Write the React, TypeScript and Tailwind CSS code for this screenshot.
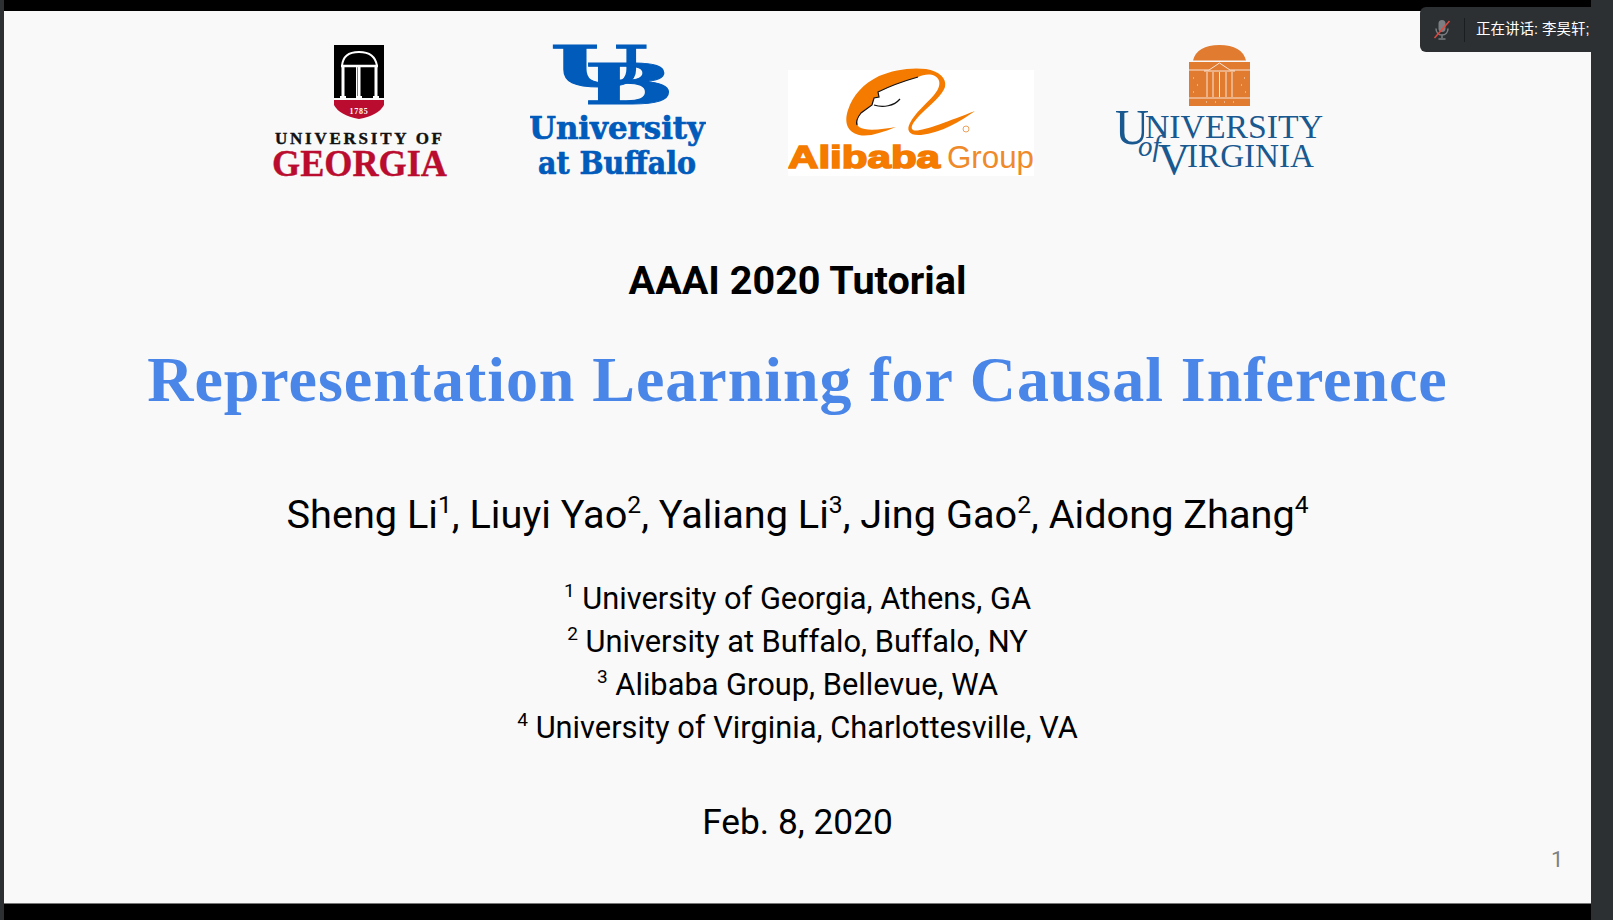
import React from 'react';

const roboto = { fontFamily: 'Roboto, "Noto Sans CJK SC", sans-serif' };

const GeorgiaLogo = () => (
  <svg width="176" height="135" viewBox="272 44 176 135">
    <path d="M334 45H384V98H334Z" fill="#000" />
    <path d="M334 100H384V105Q379 115 359 119Q339 115 334 105Z" fill="#ba0c2f" />
    <path d="M342 66Q343 52 359 52Q375 52 377 66" fill="none" stroke="#fff" strokeWidth="2" />
    <path d="M341 66H378" stroke="#fff" strokeWidth="2.5" />
    <path d="M343 66V97M359 66V97M376 66V97" stroke="#fff" strokeWidth="3" />
    <path d="M356.500 66V97" stroke="#fff" strokeWidth="1" />
    <path d="M340 96H346V100H340ZM356 96H362V100H356ZM373 96H379V100H373Z" fill="#fff" />
    <text x="359" y="114" textAnchor="middle" fontFamily="Liberation Serif" fontSize="8" fontWeight="700" fill="#fff" letterSpacing="0.8">1785</text>
    <text x="275" y="144" textLength="167" fontFamily="Liberation Serif" fontSize="17" fontWeight="700" fill="#111" stroke="#111" strokeWidth="0.4">UNIVERSITY OF</text>
    <text x="272" y="176" textLength="175" lengthAdjust="spacingAndGlyphs" fontFamily="Liberation Serif" fontSize="38" fontWeight="700" fill="#ba0c2f" stroke="#ba0c2f" strokeWidth="0.4">GEORGIA</text>
  </svg>
);

const BuffaloLogo = () => (
  <svg width="176" height="135" viewBox="530 44 176 135">
    <text x="550" y="86" textLength="98" lengthAdjust="spacingAndGlyphs" fontFamily="DejaVu Serif" fontSize="56" fontWeight="700" fill="#005bbb" stroke="#005bbb" strokeWidth="1">U</text>
    <text x="584" y="104" textLength="90" lengthAdjust="spacingAndGlyphs" fontFamily="DejaVu Serif" fontSize="56" fontWeight="700" fill="#005bbb" stroke="#005bbb" strokeWidth="1">B</text>
    <text x="529" y="139" textLength="176" lengthAdjust="spacingAndGlyphs" fontFamily="DejaVu Serif" fontSize="32" fontWeight="700" fill="#005bbb" stroke="#005bbb" strokeWidth="0.7">University</text>
    <text x="538" y="174" textLength="158" lengthAdjust="spacingAndGlyphs" fontFamily="DejaVu Serif" fontSize="32" fontWeight="700" fill="#005bbb" stroke="#005bbb" strokeWidth="0.7">at Buffalo</text>
  </svg>
);

const AlibabaLogo = () => (
  <svg width="246" height="135" viewBox="787 44 246 135">
    <rect x="787" y="70" width="246" height="106" fill="#fff" />
    <path
      d="M895 127C880 133 868 137 858 135C846 132 843 122 847 110C852 95 862 84 878 76C892 70 910 67 925 69C938 71 946 78 944 87C941 96 930 104 921 113C914 120 908 127 912 130C918 133 945 122 974 111C960 121 940 133 920 135C908 136 905 130 909 123C914 113 925 104 933 95C939 88 941 80 934 76C928 73 922 75 917 77C903 81 889 86 877 92L878 97L873 98L871 105L860 113C856 118 855 124 858 127C866 132 882 129 895 127Z"
      fill="#f47b00"
    />
    <path d="M917 77C903 81 889 86 877 92L878 97L873 98L871 105L860 113C856 118 855 122 856 125" fill="none" stroke="#111" strokeWidth="1.200" />
    <path d="M873 105C882 108 893 106 899 99" fill="none" stroke="#111" strokeWidth="1.200" />
    <circle cx="965" cy="129" r="3" fill="none" stroke="#e9a25c" strokeWidth="1" />
    <text x="787" y="168" textLength="152" lengthAdjust="spacingAndGlyphs" fontFamily="Liberation Sans" fontSize="32" fontWeight="700" fill="#f47b00" stroke="#f47b00" strokeWidth="1.600">Alibaba</text>
    <text x="946" y="168" textLength="87" lengthAdjust="spacingAndGlyphs" fontFamily="Liberation Sans" fontSize="32" fill="#ef8a2a">Group</text>
  </svg>
);

const VirginiaLogo = () => (
  <svg width="207" height="135" viewBox="1115 44 207 135">
    <path d="M1192 60.500Q1196 45 1218.500 45Q1241 45 1245 60.500Z" fill="#e07b30" />
    <rect x="1188" y="62" width="61" height="44" fill="#e07b30" />
    <path d="M1188 70H1208L1218.500 63L1229 70H1249" fill="none" stroke="#fbe7d8" strokeWidth="1" />
    <path d="M1203 71H1234M1206 72V97M1212 72V97M1218.500 72V97M1225 72V97M1231 72V97M1188 98H1249" fill="none" stroke="#fbe7d8" strokeWidth="1" />
    <path d="M1192 78h1M1196 85h1M1192 92h1M1243 78h1M1240 85h1M1244 92h1M1205 102h1M1214 102h1M1223 102h1M1232 102h1" stroke="#fbe7d8" strokeWidth="1" />
    <text x="1114" y="144" textLength="34" lengthAdjust="spacingAndGlyphs" fontFamily="Liberation Serif" fontSize="50" fill="#19598f">U</text>
    <text x="1144" y="138" textLength="178" lengthAdjust="spacingAndGlyphs" fontFamily="Liberation Serif" fontSize="34" fill="#19598f">NIVERSITY</text>
    <text x="1137" y="156" fontFamily="Liberation Serif" fontSize="29" fontStyle="italic" fill="#19598f">of</text>
    <text x="1157" y="174" textLength="32" lengthAdjust="spacingAndGlyphs" fontFamily="Liberation Serif" fontSize="44" fill="#19598f">V</text>
    <text x="1186" y="167" textLength="127" lengthAdjust="spacingAndGlyphs" fontFamily="Liberation Serif" fontSize="34" fill="#19598f">IRGINIA</text>
  </svg>
);

const Sup = ({ children }: { children: React.ReactNode }) => (
  <sup className="text-[62%] align-baseline relative -top-[0.62em] leading-none">{children}</sup>
);

export default function App() {
  const affiliations = [
    ['1', 'University of Georgia, Athens, GA'],
    ['2', 'University at Buffalo, Buffalo, NY'],
    ['3', 'Alibaba Group, Bellevue, WA'],
    ['4', 'University of Virginia, Charlottesville, VA'],
  ];

  return (
    <div className="w-[1613px] h-[920px] bg-black flex overflow-hidden relative" style={roboto}>
      <div className="w-1 bg-[#2c3033]" />

      <main className="w-[1587px] h-[893px] mt-[11px] bg-[#f9f9fa] border-b border-[#777] flex flex-col items-center relative text-black">
        <div className="flex gap-[82px] pt-[33px]">
          <GeorgiaLogo />
          <BuffaloLogo />
          <AlibabaLogo />
          <VirginiaLogo />
        </div>

        <h2 className="mt-[79px] text-[39.600px] leading-[46px] font-bold">AAAI 2020 Tutorial</h2>

        <h1 className="mt-[38px] text-[64px] leading-[76px] font-bold text-[#4a86e8] tracking-[0.95px]" style={{ fontFamily: '"Liberation Serif", serif' }}>
          Representation Learning for Causal Inference
        </h1>

        <p className="mt-[72px] text-[39.700px] leading-[50px]">
          Sheng Li<Sup>1</Sup>, Liuyi Yao<Sup>2</Sup>, Yaliang Li<Sup>3</Sup>, Jing Gao<Sup>2</Sup>, Aidong Zhang<Sup>4</Sup>
        </p>

        <div className="mt-[37px] text-[30.800px] leading-[43px] text-center">
          {affiliations.map(([n, label]) => (
            <p key={n}>
              <Sup>{n}</Sup> {label}
            </p>
          ))}
        </div>

        <p className="mt-[51px] text-[35.300px] leading-[44px]">Feb. 8, 2020</p>

        <span className="absolute left-[1547px] top-[836px] text-[22px] leading-[26px] text-[#808080]">1</span>
      </main>

      <div className="w-[22px] bg-[#2c3033]" />

      <div className="absolute left-[1420px] top-[7px] w-[171px] h-[45px] bg-[#2c3033] rounded-l-[6px] flex items-center overflow-hidden">
        <svg width="18" height="22" viewBox="0 0 18 22" className="ml-[13px] shrink-0">
          <rect x="5.500" y="1" width="7" height="12" rx="3.500" fill="#7b7f83" />
          <path d="M3 9.500C3 13.500 5.500 16 9 16C12.500 16 15 13.500 15 9.500M9 16V19M5.500 20H12.500" fill="none" stroke="#7b7f83" strokeWidth="1.500" />
          <path d="M1.500 19L16.500 2" stroke="#e0483e" strokeWidth="1.500" />
        </svg>
        <div className="ml-[13px] w-px h-[24px] bg-[#1b1d1f] shrink-0" />
        <span className="ml-[11px] text-[14.500px] text-white whitespace-nowrap" style={{ fontFamily: '"Liberation Sans", "Noto Sans CJK SC", sans-serif' }}>
          正在讲话: 李昊轩;
        </span>
      </div>
    </div>
  );
}
